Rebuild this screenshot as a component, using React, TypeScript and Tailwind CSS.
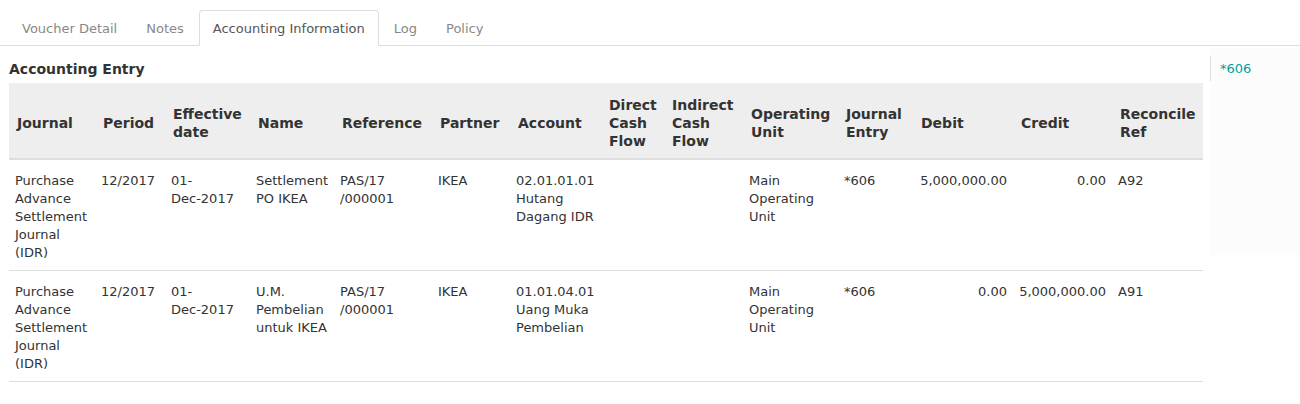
const tabs = ['Voucher Detail', 'Notes', 'Accounting Information', 'Log', 'Policy'];
const activeTab = 'Accounting Information';

// column widths taken from the screenshot
const columns = [
    { label: 'Journal',            width: 'w-[86px]' },
    { label: 'Period',             width: 'w-[70px]' },
    { label: 'Effective date',     width: 'w-[85px]' },
    { label: 'Name',               width: 'w-[84px]' },
    { label: 'Reference',          width: 'w-[98px]' },
    { label: 'Partner',            width: 'w-[78px]' },
    { label: 'Account',            width: 'w-[91px]' },
    { label: 'Direct Cash Flow',   width: 'w-[63px]' },
    { label: 'Indirect Cash Flow', width: 'w-[79px]' },
    { label: 'Operating Unit',     width: 'w-[95px]' },
    { label: 'Journal Entry',      width: 'w-[75px]' },
    { label: 'Debit',              width: 'w-[100px]' },
    { label: 'Credit',             width: 'w-[99px]' },
    { label: 'Reconcile Ref',      width: 'w-[91px]' },
];

const entries = [
    {
        journal: 'Purchase Advance Settlement Journal (IDR)',
        period: '12/2017',
        day: '01-',
        month: 'Dec-2017',
        name: 'Settlement PO IKEA',
        reference: 'PAS/17 /000001',
        partner: 'IKEA',
        account: '02.01.01.01 Hutang Dagang IDR',
        direct: '',
        indirect: '',
        unit: 'Main Operating Unit',
        move: '*606',
        debit: '5,000,000.00',
        credit: '0.00',
        reconcile: 'A92',
    },
    {
        journal: 'Purchase Advance Settlement Journal (IDR)',
        period: '12/2017',
        day: '01-',
        month: 'Dec-2017',
        name: 'U.M. Pembelian untuk IKEA',
        reference: 'PAS/17 /000001',
        partner: 'IKEA',
        account: '01.01.04.01 Uang Muka Pembelian',
        direct: '',
        indirect: '',
        unit: 'Main Operating Unit',
        move: '*606',
        debit: '0.00',
        credit: '5,000,000.00',
        reconcile: 'A91',
    },
];

const td = 'px-1.5 pt-3 pb-2';

export default function App() {
    return (
        <div className="min-h-[404px] w-[1300px] bg-white font-['DejaVu_Sans',sans-serif] text-[13px] leading-[18px] text-[#333]">
            {/* Tabs */}
            <ul className="flex border-b border-[#ddd] pl-2 pt-[10px]">
                {tabs.map(t => (
                    <li
                        key={t}
                        className={`-mb-px mr-px rounded-t-[4px] border px-[13px] pt-[9px] pb-[7px] ${
                            t === activeTab
                                ? 'border-[#ddd] border-b-white bg-white text-[#555]'
                                : 'border-transparent text-[#888]'
                        }`}
                    >
                        {t}
                    </li>
                ))}
            </ul>

            <div className="flex">
                {/* Accounting entries */}
                <div className="w-[1210px] pl-[9px] pr-[7px]">
                    <h3 className="mt-[13px] mb-1 text-[14px] font-bold leading-5 text-[#333]">Accounting Entry</h3>
                    <table className="w-[1194px] table-fixed border-collapse">
                        <colgroup>
                            {columns.map(c => (
                                <col key={c.label} className={c.width} />
                            ))}
                        </colgroup>
                        <thead className="bg-[#eee]">
                            <tr className="border-b-2 border-[#ddd]">
                                {columns.map(c => (
                                    <th key={c.label} className="px-2 pt-[13px] pb-2 text-left align-middle text-[14px] font-bold text-[#333]">
                                        {c.label}
                                    </th>
                                ))}
                            </tr>
                        </thead>
                        <tbody>
                            {entries.map((e, i) => (
                                <tr key={i} className="border-b border-[#ddd] align-top">
                                    <td className={td}>{e.journal}</td>
                                    <td className={td}>{e.period}</td>
                                    <td className={td}>
                                        {e.day}<span className="whitespace-nowrap">{e.month}</span>
                                    </td>
                                    <td className={td}>{e.name}</td>
                                    <td className={td}>{e.reference}</td>
                                    <td className={td}>{e.partner}</td>
                                    <td className={td}>{e.account}</td>
                                    <td className={td}>{e.direct}</td>
                                    <td className={td}>{e.indirect}</td>
                                    <td className={td}>{e.unit}</td>
                                    <td className={td}>{e.move}</td>
                                    <td className={`${td} text-right`}>{e.debit}</td>
                                    <td className={`${td} text-right`}>{e.credit}</td>
                                    <td className={td}>{e.reconcile}</td>
                                </tr>
                            ))}
                        </tbody>
                    </table>
                </div>

                {/* Side panel */}
                <div className="mt-[2px] h-[207px] flex-1 bg-[#fcfcfc] pt-2">
                    <div className="border-l border-[#ddd] pl-[9px] leading-[25px] text-[#00a09d]">*606</div>
                </div>
            </div>
        </div>
    );
}
